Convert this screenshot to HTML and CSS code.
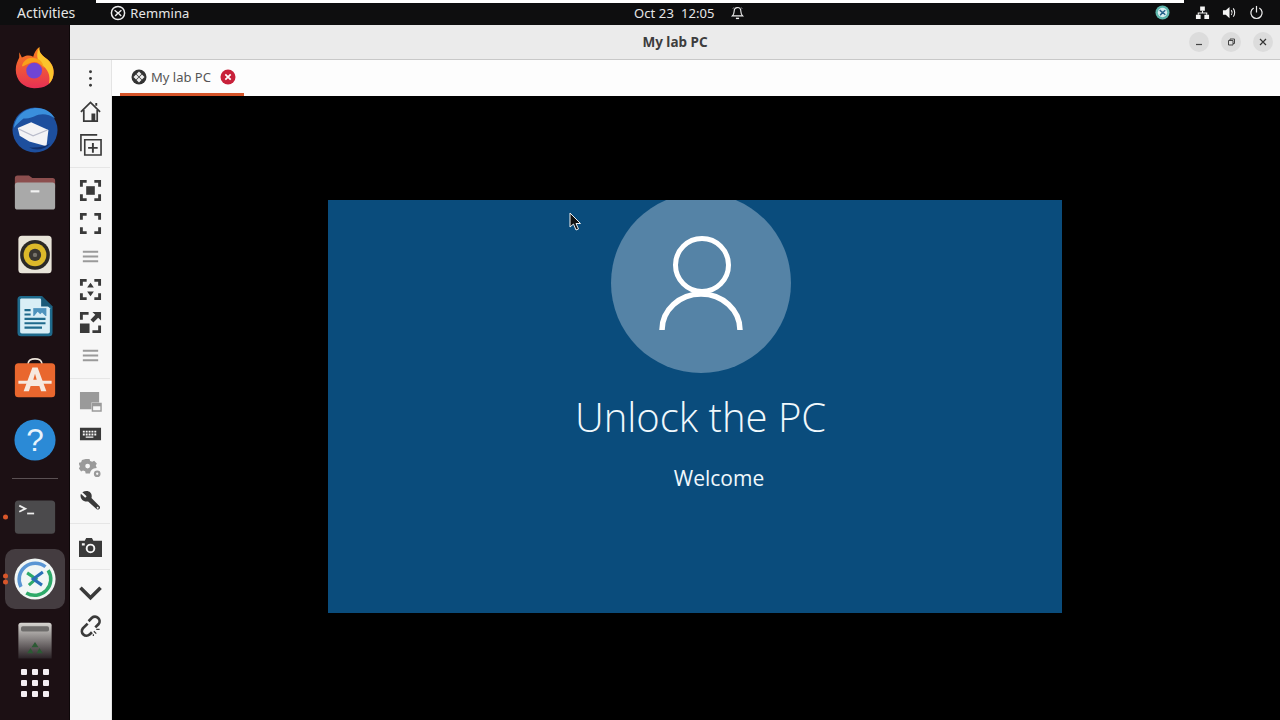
FILE: index.html
```html
<!DOCTYPE html>
<html lang="en">

<head>
    <meta charset="UTF-8">
    <title>My lab PC</title>
    <link rel="stylesheet" href="styles.css">
</head>

<body>
    <!-- Top bar -->
    <header class="topbar">
        <div class="topbar-strip"></div>
        <div class="topbar-row">
            <div class="topbar-left">
                <span class="activities">Activities</span>
                <svg class="app-icon" viewBox="0 0 16 16">
                    <circle cx="8" cy="8" r="6.6" fill="none" stroke="#eee" stroke-width="1.5" />
                    <path d="M4.6 5.2 8 8 5.2 11M11.4 5.2 8.2 8l3 3" fill="none" stroke="#eee" stroke-width="1.4" />
                </svg>
                <span class="app-name">Remmina</span>
            </div>
            <div class="topbar-clock">
                <span>Oct 23&nbsp; 12:05</span>
                <svg class="bell" viewBox="0 0 16 16">
                    <path d="M8 2.2c-2.6 0-3.6 2-3.6 4.3 0 2.3-.9 3.5-1.9 4.5h11c-1-1-1.9-2.2-1.9-4.5C11.6 4.2 10.6 2.2 8 2.2Z" fill="none" stroke="#eee" stroke-width="1.2" />
                    <path d="M6.3 13h3.4v1.5H6.3z" fill="#eee" />
                    <path d="M3 3.5 4.2 2M13 3.5 11.8 2" stroke="#ccc" stroke-width=".8" />
                </svg>
            </div>
            <div class="topbar-right">
                <svg class="tray-app" viewBox="0 0 16 16">
                    <circle cx="8" cy="8" r="7.5" fill="#5fb7ad" />
                    <circle cx="8" cy="8" r="5" fill="#d7eef0" />
                    <path d="M5 5.5 8 8l-2.5 3M11 5.5 8.2 8l2.800 2.500" fill="none" stroke="#24608a" stroke-width="1.5" />
                </svg>
                <svg class="tray" viewBox="0 0 16 16">
                    <path d="M5.5 1.5h5V6h-5zM1 10.500h5V15H1zM10 10.500h5V15h-5z" fill="#f4f4f4" />
                    <path d="M8 6v2.500M3.500 10.500V8.500h9v2" fill="none" stroke="#f4f4f4" stroke-width="1.2" />
                </svg>
                <svg class="tray" viewBox="0 0 16 16">
                    <path d="M1 5.500h3L8 2v12L4 10.500H1z" fill="#f4f4f4" />
                    <path d="M10 5.500c1 1.500 1 3.500 0 5M12 3.500c2 2.500 2 6.500 0 9" fill="none" stroke="#f4f4f4" stroke-width="1.2" />
                </svg>
                <svg class="tray" viewBox="0 0 16 16">
                    <path d="M5 3.2a6 6 0 1 0 6 0" fill="none" stroke="#f0f0f0" stroke-width="1.3" />
                    <path d="M8 1v7" stroke="#f0f0f0" stroke-width="1.3" />
                </svg>
            </div>
        </div>
    </header>

    <div class="desktop">
        <!-- Dock -->
        <nav class="dock">
            <div class="dock-item">
                <svg class="dock-icon" viewBox="0 0 48 48">
                    <defs>
                        <linearGradient id="fox" x1="0" y1="0" x2="0" y2="1">
                            <stop offset="0" stop-color="#f9801b" />
                            <stop offset="1" stop-color="#e62f55" />
                        </linearGradient>
                    </defs>
                    <path d="M29 0c-1 7 4 10 9 14 7 6 9 14 6 22-3 7-8 11-21 11C11 47 2 38 2 26c0-6 2-10 4-14V6l3 6c5-3 9-3 13-1 1-4 3-8 7-11Z" fill="url(#fox)" />
                    <path d="M29 0c-1 7 4 10 9 14 7 6 9 14 6 22-1 2-2 4-4 6 2-9-1-17-9-22-5-4-6-13-2-20Z" fill="#fbc52c" />
                    <path d="M9 22c2-9 11-12 19-8 5 3 6 8 6 10-4-6-10-8-15-6-4 1-6 4-10 4Z" fill="#f9a01b" />
                    <circle cx="23" cy="27" r="9" fill="#6f45d4" />
                </svg>
            </div>
            <div class="dock-item">
                <svg class="dock-icon wide" viewBox="0 0 48 48">
                    <circle cx="24" cy="24" r="23.5" fill="#1d4f9e" />
                    <path d="M2 22C3 10 13 1 26 1c8 0 15 4 19 11-7-5-15-6-22-2-4 2-8 2-11 2-4 3-7 6-10 10Z" fill="#3a8fdc" />
                    <path d="M6 22l14-6 18 8-2 17-18-5-10-6Z" fill="#f3f3f5" />
                    <path d="M7 23l15 7 15-6" fill="none" stroke="#b9bccb" stroke-width="1.2" />
                    <path d="M18 42c6 4 16 3 22-4-6 3-14 5-22 4Z" fill="#0f2f6c" />
                </svg>
            </div>
            <div class="dock-item">
                <svg class="dock-icon" viewBox="0 0 48 48">
                    <path d="M1 8a3 3 0 0 1 3-3h13l4 3h23a3 3 0 0 1 3 3v8H1Z" fill="#8c4e4e" />
                    <path d="M1 16a3 3 0 0 1 3-3h40a3 3 0 0 1 3 3v25a3 3 0 0 1-3 3H4a3 3 0 0 1-3-3Z" fill="#a9a9a9" />
                    <path d="M19 22h10v2.500H19z" fill="#f2f2f2" />
                </svg>
            </div>
            <div class="dock-item">
                <svg class="dock-icon" viewBox="0 0 48 48">
                    <rect x="5" y="3" width="38" height="43" rx="4" fill="#e8e4d9" />
                    <circle cx="24" cy="25" r="17" fill="#2b2926" />
                    <circle cx="24" cy="25" r="13" fill="#dcb92a" />
                    <circle cx="24" cy="25" r="7" fill="#3a3732" />
                    <circle cx="24" cy="25" r="2.5" fill="#77736b" />
                </svg>
            </div>
            <div class="dock-item">
                <svg class="dock-icon" viewBox="0 0 48 48">
                    <path d="M8 1h24l12 12v30a4 4 0 0 1-4 4H8a4 4 0 0 1-4-4V5a4 4 0 0 1 4-4Z" fill="#1f6a8c" />
                    <path d="M8 4h22l11 11v27a2 2 0 0 1-2 2H9a2 2 0 0 1-2-2V5Z" fill="#d9eef6" />
                    <path d="M31 1l13 12H31Z" fill="#1a5a78" />
                    <path d="M12 16h7v2.500h-7zM12 21h7v2.500h-7zM12 26h24v2.500H12zM12 31h24v2.500H12zM12 36h20v2.500H12z" fill="#1f6a8c" />
                    <path d="M22 15h15v9H22z" fill="#4e93bd" />
                    <path d="M23 24l4-5 3 3 2-2 4 4Z" fill="#d9eef6" />
                </svg>
            </div>
            <div class="dock-item">
                <svg class="dock-icon" viewBox="0 0 48 48">
                    <path d="M16 8c0-8 16-8 16 0" fill="none" stroke="#efe7dc" stroke-width="2" />
                    <rect x="1" y="7" width="46" height="39" rx="4" fill="#e9672e" />
                    <path d="M21 12h6l10 27h-6l-2-6H19l-2 6h-6Z" fill="#f6e9df" />
                    <path d="M22 26h4l-2-7Z" fill="#e9672e" />
                    <path d="M5 27h38v3.500H5z" fill="#f6e9df" />
                </svg>
            </div>
            <div class="dock-item">
                <svg class="dock-icon" viewBox="0 0 48 48">
                    <circle cx="24" cy="24" r="23.5" fill="#2b8ad6" />
                    <text x="24" y="37" class="help-mark">?</text>
                </svg>
            </div>
            <div class="dock-sep"></div>
            <div class="dock-item">
                <span class="run-dots"><i></i></span>
                <svg class="dock-icon" viewBox="0 0 48 48">
                    <rect x="1" y="5" width="46" height="38" rx="4" fill="#4b4a4c" />
                    <path d="M6 11l7 3.500-7 3.500" fill="none" stroke="#eee" stroke-width="2" />
                    <path d="M15 20h8" stroke="#eee" stroke-width="2" />
                </svg>
            </div>
            <div class="dock-item active">
                <span class="run-dots"><i></i><i></i></span>
                <svg class="dock-icon" viewBox="0 0 48 48">
                    <circle cx="24" cy="24" r="23.5" fill="#f1f6f5" />
                    <path d="M8 33A18.500 18.500 0 0 1 36 10" fill="none" stroke="#5a96d4" stroke-width="4" />
                    <path d="M39 14A18.500 18.500 0 0 1 14 40" fill="none" stroke="#2eaa6a" stroke-width="4" />
                    <path d="M15 17l10 7-8 7" fill="none" stroke="#2eaa6a" stroke-width="3.5" />
                    <path d="M33 16l-11 8 10 7" fill="none" stroke="#2a6fb8" stroke-width="3.5" />
                </svg>
            </div>
            <div class="dock-item">
                <svg class="dock-icon" viewBox="0 0 48 48">
                    <defs>
                        <linearGradient id="bin" x1="0" y1="0" x2="0" y2="1">
                            <stop offset="0" stop-color="#d8d6d2" />
                            <stop offset="1" stop-color="#2a2226" />
                        </linearGradient>
                    </defs>
                    <path d="M8 3h32a3 3 0 0 1 3 3v38H5V6a3 3 0 0 1 3-3Z" fill="url(#bin)" />
                    <rect x="8" y="7" width="32" height="6" rx="2" fill="#6e6c6b" />
                    <path d="M24 25l4 6h-8ZM15 38l4-6 3 6ZM33 38l-4-6-3 6Z" fill="#2c5a34" />
                </svg>
            </div>
            <div class="app-grid">
                <i></i><i></i><i></i><i></i><i></i><i></i><i></i><i></i><i></i>
            </div>
        </nav>

        <!-- Remmina window -->
        <div class="window">
            <div class="titlebar">
                <span class="title">My lab PC</span>
                <div class="win-buttons">
                    <span class="win-btn">
                        <svg viewBox="0 0 10 10"><path d="M2 7.500h6" stroke="#444" stroke-width="1.2" /></svg>
                    </span>
                    <span class="win-btn">
                        <svg viewBox="0 0 10 10"><path d="M2.500 3.500H7V8H2.500zM4 3.500V2h4.500v4.500H7" fill="none" stroke="#444" /></svg>
                    </span>
                    <span class="win-btn">
                        <svg viewBox="0 0 10 10"><path d="M2 2l6 6M8 2 2 8" stroke="#333" stroke-width="1.2" /></svg>
                    </span>
                </div>
            </div>

            <div class="window-body">
                <aside class="toolbar">
                    <div class="tool">
                        <svg viewBox="0 0 24 24"><circle cx="12" cy="5" r="1.5" /><circle cx="12" cy="12" r="1.5" /><circle cx="12" cy="19" r="1.5" /></svg>
                    </div>
                    <div class="tool">
                        <svg viewBox="0 0 24 24"><path d="M2 12.500 12 2.500l10 10M5 10.500V22h14V10.500" fill="none" stroke="#3a3a3a" stroke-width="1.8" /><path d="M13 14h4v8h-4zM17 3h2v3h-2z" /></svg>
                    </div>
                    <div class="tool">
                        <svg viewBox="0 0 24 24"><path d="M6 7h17v16H6z" fill="none" stroke="#3a3a3a" stroke-width="1.7" /><path d="M2 19V2h17" fill="none" stroke="#3a3a3a" stroke-width="1.7" /><path d="M13.500 10.500h2v4h4v2h-4v4h-2v-4h-4v-2h4z" /></svg>
                    </div>
                    <div class="tool-sep"></div>
                    <div class="tool">
                        <svg viewBox="0 0 24 24"><path d="M1 8V1h7v3H4v4zM16 1h7v7h-3V4h-4zM1 16h3v4h4v3H1zM20 16h3v7h-7v-3h4z" /><path d="M7.500 7.500h9v9h-9z" /></svg>
                    </div>
                    <div class="tool">
                        <svg viewBox="0 0 24 24"><path d="M1 8V1h7v3H4v4zM16 1h7v7h-3V4h-4zM1 16h3v4h4v3H1zM20 16h3v7h-7v-3h4z" /></svg>
                    </div>
                    <div class="tool muted">
                        <svg viewBox="0 0 24 24"><path d="M4 6h16v2H4zM4 11h16v2H4zM4 16h16v2H4z" /></svg>
                    </div>
                    <div class="tool">
                        <svg viewBox="0 0 24 24"><path d="M1 8V1h7v3H4v4zM16 1h7v7h-3V4h-4zM1 16h3v4h4v3H1zM20 16h3v7h-7v-3h4z" /><path d="M12 5l3.500 5h-7zM12 19l-3.500-5h7z" /></svg>
                    </div>
                    <div class="tool">
                        <svg viewBox="0 0 24 24"><path d="M1 9V1h9v3H4v5zM1 13h10v10H1zM14 1h9v9l-3-3-5 5-3-3 5-5zM20 15h3v8h-9v-3h6z" /></svg>
                    </div>
                    <div class="tool muted">
                        <svg viewBox="0 0 24 24"><path d="M4 6h16v2H4zM4 11h16v2H4zM4 16h16v2H4z" /></svg>
                    </div>
                    <div class="tool-sep"></div>
                    <div class="tool muted">
                        <svg viewBox="0 0 24 24"><path d="M1 2h20v11h-8v7H1z" /><path d="M14 14h9v8h-9z" fill="none" stroke="#9a9a9a" stroke-width="1.5" /><path d="M14 14h9v3h-9z" /></svg>
                    </div>
                    <div class="tool">
                        <svg viewBox="0 0 24 24"><path fill-rule="evenodd" d="M1 5h22v13H1ZM4 8v2h2V8Zm3 0v2h2V8Zm3 0v2h2V8Zm3 0v2h2V8Zm3 0v2h2V8ZM4 11v2h2v-2Zm3 0v2h2v-2Zm3 0v2h2v-2Zm3 0v2h2v-2Zm3 0v2h2v-2Zm-9 3v1.500h8V14Z" /></svg>
                    </div>
                    <div class="tool muted">
                        <svg viewBox="0 0 24 24"><path fill-rule="evenodd" d="M7 3h4l.6 2.200 2.200.9 2-1.100 2.800 2.800-1.100 2 .9 2.200 0 .5-3 .5a6 6 0 0 0-3.500 3.500l-.5 1.700H7l-.6-2.200-2.200-.9-2 1.100L-.1 13l1.100-2-.9-2.200L0 7.500V7l2.200-.6.900-2.200Zm2 5a2.500 2.500 0 1 0 0 5 2.500 2.500 0 0 0 0-5Z" /><path d="M19 15a3.500 3.500 0 1 0 0 7 3.500 3.500 0 0 0 0-7Zm0 2.300a1.200 1.200 0 1 1 0 2.400 1.200 1.200 0 0 1 0-2.400Z" fill-rule="evenodd" /></svg>
                    </div>
                    <div class="tool">
                        <svg viewBox="0 0 24 24"><path d="M3.500 3.500 8 7.500 6.500 9 2 5c-1.500 4 1.500 9 7.500 8l9 8c2 1.500 4.500-1 3-3l-8.500-8.500C14.500 4 9.500 0 3.500 3.500Z" /><circle cx="19.500" cy="19.500" r="1" fill="#f7f7f7" /></svg>
                    </div>
                    <div class="tool-sep"></div>
                    <div class="tool">
                        <svg viewBox="0 0 24 24"><path fill-rule="evenodd" d="M0 6h6l1.500-3h6L15 6h9v17H0Zm12 3a5 5 0 1 0 0 10 5 5 0 0 0 0-10Zm0 2a3 3 0 1 1 0 6 3 3 0 0 1 0-6ZM3 8.500V11h3V8.500Z" /></svg>
                    </div>
                    <div class="tool-sep"></div>
                    <div class="tool">
                        <svg viewBox="0 0 24 24"><path d="M1.500 7 12 17.500 22.500 7" fill="none" stroke="#3a3a3a" stroke-width="3.800" /></svg>
                    </div>
                    <div class="tool">
                        <svg viewBox="0 0 24 24"><path d="M10 7.500l3.500-3.500a4.800 4.800 0 0 1 7 6.500L17 14" fill="none" stroke="#3a3a3a" stroke-width="2.800" /><path d="M9 10l-5 5a4.800 4.800 0 0 0 7 6.500l2.500-2.500" fill="none" stroke="#3a3a3a" stroke-width="2.800" /><path d="M15.500 18l2.500 2.500M18 16h3.500M15 21v2" stroke="#3a3a3a" stroke-width="1.300" /></svg>
                    </div>
                </aside>

                <main class="session">
                    <div class="tabbar">
                        <div class="tab">
                            <svg class="tab-icon" viewBox="0 0 16 16">
                                <circle cx="8" cy="8" r="7.5" fill="#333" />
                                <path d="M8 2.500 10.500 5 8 7.500 5.500 5ZM8 8.500l2.500 2.500L8 13.500 5.500 11ZM2.500 8 5 5.500 7.500 8 5 10.500ZM8.500 8 11 5.500 13.500 8 11 10.500Z" fill="#eee" />
                            </svg>
                            <span class="tab-label">My lab PC</span>
                            <svg class="tab-close" viewBox="0 0 16 16">
                                <circle cx="8" cy="8" r="7.5" fill="#c8213a" />
                                <path d="M5.300 5.300l5.400 5.400M10.700 5.300l-5.400 5.400" stroke="#fff" stroke-width="1.7" />
                            </svg>
                        </div>
                    </div>
                    <div class="viewport">
                        <div class="remote-screen">
                            <div class="avatar">
                                <svg class="avatar-icon" viewBox="0 0 84 94">
                                    <circle cx="43" cy="29" r="26.5" fill="none" stroke="#fff" stroke-width="5" />
                                    <path d="M3 94A39 36 0 0 1 81 94" fill="none" stroke="#fff" stroke-width="5.500" />
                                </svg>
                            </div>
                            <h1 class="unlock">Unlock the PC</h1>
                            <p class="welcome">Welcome</p>
                            <svg class="pointer" viewBox="0 0 12 20">
                                <path d="M1 1v14l3.500-3 2.500 6 2.500-1-2.500-5.500h4.500Z" fill="#111" stroke="#eee" stroke-width="1" />
                            </svg>
                        </div>
                    </div>
                </main>
            </div>
        </div>
    </div>
</body>

</html>
```

FILE: styles.css
```css
* {
    box-sizing: border-box;
}

html,
body {
    height: 100%;
}

body {
    margin: 0;
    display: flex;
    flex-direction: column;
    overflow: hidden;
    font-family: "Noto Sans", "Open Sans", sans-serif;
    background-color: #000;
}

/* Top bar */
.topbar {
    height: 25px;
    flex: none;
    display: flex;
    flex-direction: column;
    align-items: center;
    background-color: #0e0e0f;
    color: #e6e6e6;
    font-size: 13px;
}

.topbar-strip {
    width: 1088px;
    height: 3px;
    flex: none;
    background-color: #fff;
}

.topbar-row {
    width: 100%;
    flex: 1;
    display: grid;
    grid-template-columns: 617px auto 1fr;
    align-items: center;
    padding: 0 16px 3px 17px;
}

.topbar-left {
    display: flex;
    align-items: center;
}

.activities {
    margin-right: 35px;
    font-size: 14px;
}

.app-icon {
    width: 16px;
    height: 16px;
    margin-right: 4px;
}

.app-name {
    letter-spacing: .1px;
}

.topbar-clock {
    display: flex;
    align-items: center;
    gap: 15px;
    letter-spacing: .1px;
}

.bell {
    width: 15px;
    height: 16px;
}

.topbar-right {
    display: flex;
    justify-content: flex-end;
    align-items: center;
    gap: 12px;
}

.tray-app {
    width: 15px;
    height: 15px;
    margin-right: 13px;
}

.tray {
    width: 15px;
    height: 15px;
}

/* Dock */
.desktop {
    flex: 1;
    display: flex;
    min-height: 0;
}

.dock {
    width: 70px;
    flex: none;
    padding-top: 12px;
    display: flex;
    flex-direction: column;
    align-items: center;
    background-color: #1c1014;
    border-right: 1px solid #0d0709;
}

.dock-item {
    position: relative;
    width: 60px;
    height: 62px;
    flex: none;
    display: flex;
    align-items: center;
    justify-content: center;
    border-radius: 10px;
}

.dock-item.active {
    background-color: #443c40;
    height: 60px;
    margin: 1px 0;
}

.dock-icon {
    width: 42px;
    height: 42px;
}

.dock-icon.wide {
    width: 46px;
    height: 46px;
}

.help-mark {
    font-family: "Liberation Sans", sans-serif;
    font-size: 36px;
    fill: #e8f3fb;
    text-anchor: middle;
}

.dock-sep {
    width: 46px;
    height: 1px;
    margin: 7px 0;
    flex: none;
    background-color: #5a5053;
}

.run-dots {
    position: absolute;
    left: -2px;
    top: 50%;
    transform: translateY(-50%);
    display: flex;
    flex-direction: column;
    gap: 1px;
}

.run-dots i {
    display: block;
    width: 5px;
    height: 5px;
    border-radius: 50%;
    background-color: #d8562a;
}

.app-grid {
    margin-top: -3px;
    display: grid;
    grid-template-columns: repeat(3, 6px);
    grid-auto-rows: 6px;
    gap: 5px;
}

.app-grid i {
    background-color: #f4eef2;
    border-radius: 1px;
}

/* Window */
.window {
    flex: 1;
    min-width: 0;
    display: flex;
    flex-direction: column;
}

.titlebar {
    height: 35px;
    flex: none;
    display: grid;
    grid-template-columns: 1fr auto 1fr;
    align-items: center;
    padding: 0 7px;
    background-color: #ebebeb;
    border-bottom: 1px solid #c8c8c8;
}

.title {
    grid-column: 2;
    font-size: 13.5px;
    font-weight: 700;
    color: #3d3d3d;
}

.win-buttons {
    grid-column: 3;
    display: flex;
    justify-content: flex-end;
    gap: 12px;
}

.win-btn {
    width: 20px;
    height: 20px;
    display: flex;
    align-items: center;
    justify-content: center;
    border-radius: 50%;
    background-color: #dcdcdc;
}

.win-btn svg {
    width: 10px;
    height: 10px;
}

.window-body {
    flex: 1;
    display: flex;
    min-height: 0;
}

.toolbar {
    width: 42px;
    flex: none;
    padding: 2px 1px 0 0;
    display: flex;
    flex-direction: column;
    background-color: #f7f7f7;
    border-right: 1px solid #e4e4e4;
}

.tool {
    height: 33px;
    flex: none;
    display: flex;
    align-items: center;
    justify-content: center;
}

.tool svg {
    width: 23px;
    height: 23px;
    fill: #3a3a3a;
    overflow: visible;
}

.tool.muted svg {
    fill: #9a9a9a;
}

.tool-sep {
    height: 1px;
    flex: none;
    margin: 6px 0;
    background-color: #e6e6e6;
}

/* Session area */
.session {
    flex: 1;
    min-width: 0;
    display: flex;
    flex-direction: column;
}

.tabbar {
    height: 36px;
    flex: none;
    padding-left: 8px;
    background-color: #fdfdfd;
}

.tab {
    width: 124px;
    height: 100%;
    display: flex;
    align-items: center;
    gap: 4px;
    padding-left: 11px;
    border-bottom: 3px solid #d6552a;
}

.tab-icon,
.tab-close {
    width: 16px;
    height: 16px;
}

.tab-label {
    margin-right: 5px;
    font-size: 13px;
    color: #555;
}

.viewport {
    flex: 1;
    padding-top: 104px;
    display: flex;
    justify-content: center;
    align-items: flex-start;
    background-color: #000;
}

.remote-screen {
    position: relative;
    width: 734px;
    height: 413px;
    margin-left: -2px;
    display: flex;
    flex-direction: column;
    align-items: center;
    overflow: hidden;
    color: #f0f8fc;
    background-color: #0a4c7c;
}

.avatar {
    width: 180px;
    height: 180px;
    flex: none;
    margin: -7px 0 0 12px;
    display: flex;
    align-items: center;
    justify-content: center;
    border-radius: 50%;
    background-color: #5583a6;
}

.avatar-icon {
    width: 84px;
    height: 94px;
}

.unlock {
    margin: 16px 0 0 11px;
    font-family: "Open Sans", sans-serif;
    font-size: 40px;
    line-height: 56px;
    font-weight: 300;
}

.welcome {
    margin: 19px 0 0 48px;
    font-family: "Open Sans", sans-serif;
    font-size: 21px;
    line-height: 28px;
}

.pointer {
    position: absolute;
    left: 241px;
    top: 12px;
    width: 12px;
    height: 20px;
}
```
